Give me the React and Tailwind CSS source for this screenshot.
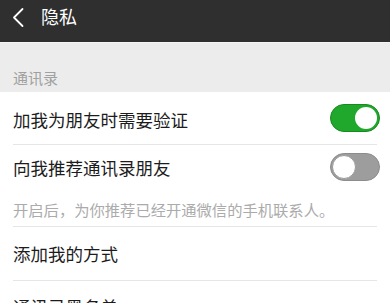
const Toggle = ({ on }) => {
  if (on) {
    return (
      <div className="relative w-[50px] h-[28px] rounded-full bg-[#1fa82b] border border-[#178a20]">
        <div className="absolute right-[2px] top-[2px] w-[22px] h-[22px] rounded-full bg-white" />
      </div>
    )
  }
  return (
    <div className="relative w-[50px] h-[28px] rounded-full bg-[#9d9d9d] border border-[#8c8c8c]">
      <div className="absolute left-[1px] top-[1px] w-[24px] h-[24px] rounded-full bg-white border border-[#9a9a9a]" />
    </div>
  )
}

const Divider = () => <div className="mx-[13px] h-px bg-[#e6e6e6]" />

export default function App() {
  return (
    <div
      className="w-[390px] h-[303px] overflow-hidden bg-white"
      style={{ fontFamily: '"Noto Sans CJK SC", "Noto Sans", sans-serif' }}
    >
      {/* Header */}
      <div className="h-[42px] bg-[#2f2f2f] flex items-center">
        <svg width="40" height="42" viewBox="0 0 40 42" className="shrink-0">
          <path d="M22.5 9 L14 17.5 L22.5 26" fill="none" stroke="#ffffff" strokeWidth="1.8" strokeLinecap="round" strokeLinejoin="round" />
        </svg>
        <span className="text-white text-[18px] leading-none -mt-[10px] ml-px">隐私</span>
      </div>

      {/* Section title */}
      <div className="h-[50px] bg-[#ececec] border-t border-[#f4f4f4] flex items-end pb-[7px] px-[13px]">
        <span className="text-[15px] leading-none text-[#a0a0a0]">通讯录</span>
      </div>

      {/* Rows */}
      <div className="h-[52px] flex items-center justify-between px-[10px] pl-[13px]">
        <span className="text-[17.5px] leading-none text-[#1c1c1c] mt-[3px]">加我为朋友时需要验证</span>
        <Toggle on />
      </div>
      <Divider />
      <div className="h-[44px] flex items-center justify-between px-[10px] pl-[13px]">
        <span className="text-[17.5px] leading-none text-[#1c1c1c] mt-[2px]">向我推荐通讯录朋友</span>
        <Toggle />
      </div>
      <div className="h-[37px] flex items-center px-[13px]">
        <span className="text-[15.3px] leading-none text-[#ababab] mt-[5px]">开启后，为你推荐已经开通微信的手机联系人。</span>
      </div>
      <Divider />
      <div className="h-[53px] flex items-center px-[13px]">
        <span className="text-[17.5px] leading-none text-[#1c1c1c]">添加我的方式</span>
      </div>
      <Divider />
      <div className="h-[53px] flex items-start pt-[17px] px-[13px]">
        <span className="text-[17.5px] leading-none text-[#1c1c1c]">通讯录黑名单</span>
      </div>
    </div>
  )
}
